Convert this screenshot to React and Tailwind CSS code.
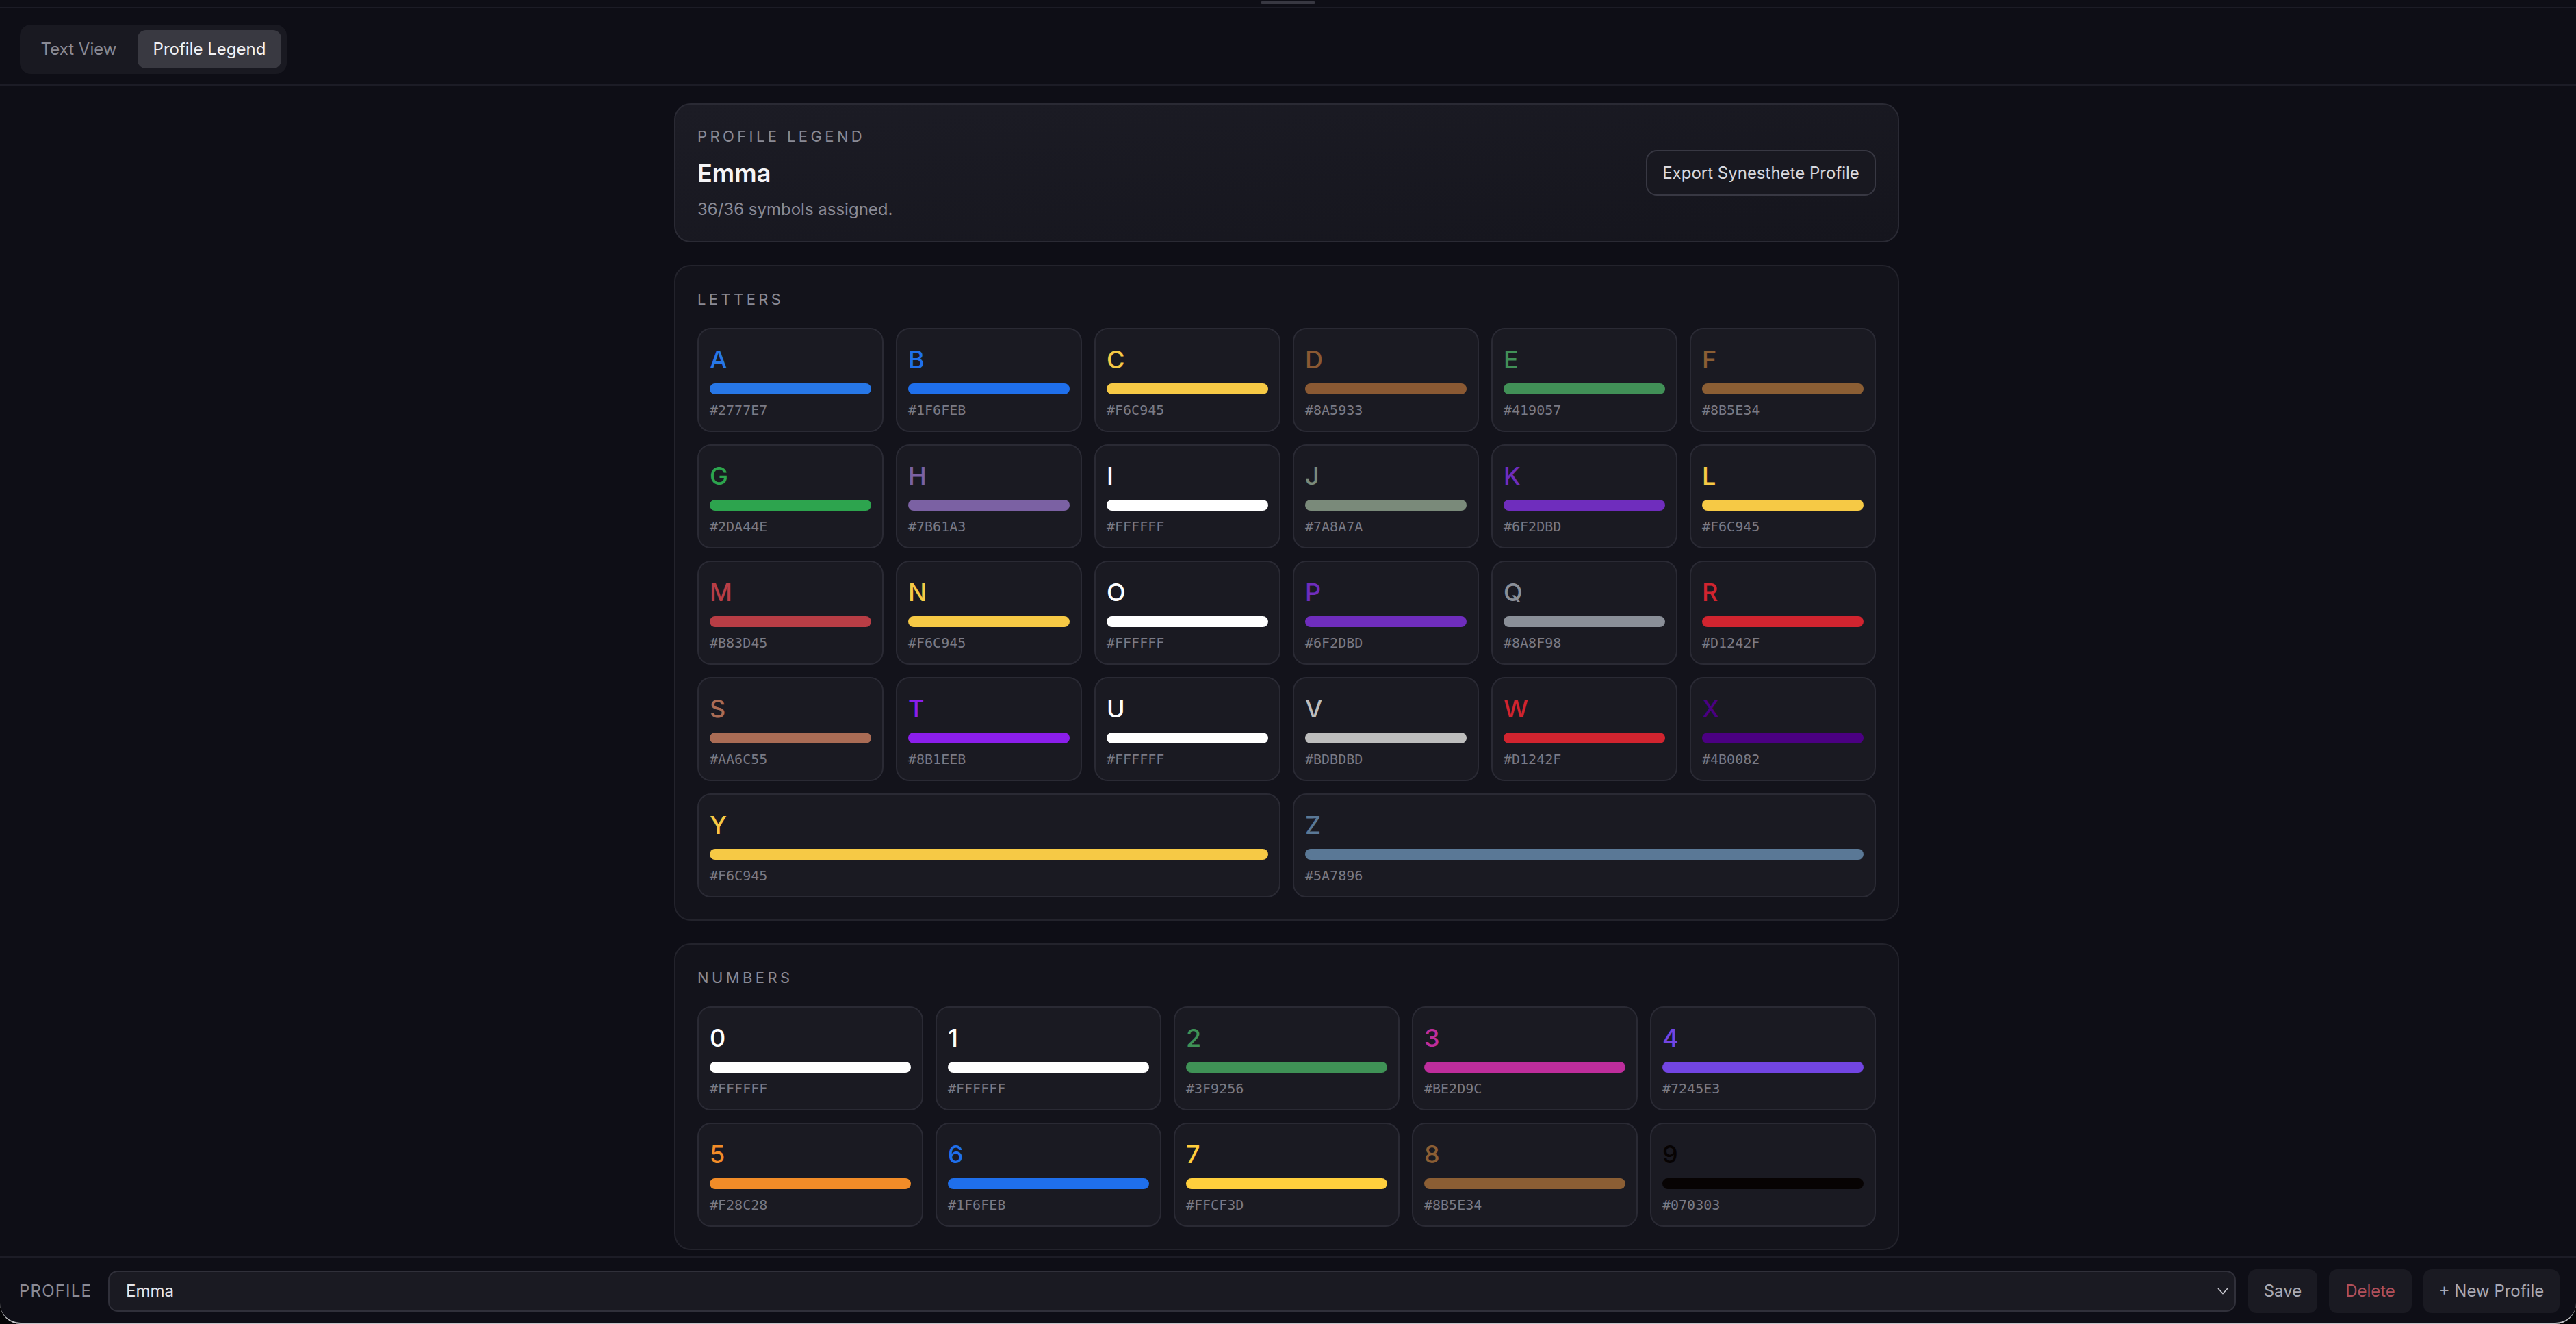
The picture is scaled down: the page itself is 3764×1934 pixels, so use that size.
import React from "react";

const LETTERS = [
  ["A", "#2777E7"], ["B", "#1F6FEB"], ["C", "#F6C945"], ["D", "#8A5933"], ["E", "#419057"], ["F", "#8B5E34"],
  ["G", "#2DA44E"], ["H", "#7B61A3"], ["I", "#FFFFFF"], ["J", "#7A8A7A"], ["K", "#6F2DBD"], ["L", "#F6C945"],
  ["M", "#B83D45"], ["N", "#F6C945"], ["O", "#FFFFFF"], ["P", "#6F2DBD"], ["Q", "#8A8F98"], ["R", "#D1242F"],
  ["S", "#AA6C55"], ["T", "#8B1EEB"], ["U", "#FFFFFF"], ["V", "#BDBDBD"], ["W", "#D1242F"], ["X", "#4B0082"],
  ["Y", "#F6C945"], ["Z", "#5A7896"],
];

const NUMBERS = [
  ["0", "#FFFFFF"], ["1", "#FFFFFF"], ["2", "#3F9256"], ["3", "#BE2D9C"], ["4", "#7245E3"],
  ["5", "#F28C28"], ["6", "#1F6FEB"], ["7", "#FFCF3D"], ["8", "#8B5E34"], ["9", "#070303"],
];

function Swatch({ ch, hex, wide }) {
  return (
    <div
      className={
        wide
          ? "col-span-3 h-[152px] rounded-[20px] border-2 border-[#2a2a34] bg-[#1a1a22] px-[16px] pt-[16px]"
          : "h-[152px] rounded-[20px] border-2 border-[#2a2a34] bg-[#1a1a22] px-[16px] pt-[16px]"
      }
    >
      <div className="text-[36px] leading-[56px] font-medium" style={{ color: hex }}>
        {ch}
      </div>
      <div className="mt-[7px] h-[16px] rounded-full" style={{ backgroundColor: hex }} />
      <div className="mt-[9px] font-['DejaVu_Sans_Mono',monospace] text-[20px] leading-[28px] text-[#7a7a85]">
        {hex}
      </div>
    </div>
  );
}

function SectionLabel({ children }) {
  return (
    <div className="text-[22px] leading-[32px] tracking-[0.2em] uppercase text-[#8a8a95]">{children}</div>
  );
}

export default function App() {
  return (
    <div className="h-screen w-full bg-[#050507] flex flex-col font-['Inter',sans-serif]">
      <div className="flex-1 min-h-0 flex flex-col bg-[#0e0e16] rounded-b-[30px] border-b-2 border-[#c4c4c8] overflow-hidden">
        {/* top strip */}
        <div className="h-[12px] shrink-0 flex justify-center border-b-2 border-[#1c1c26]">
          <div className="mt-[2px] h-[4px] w-[80px] rounded-[2px] bg-[#383842]" />
        </div>

        {/* tab bar */}
        <div className="shrink-0 flex pl-[29px] pt-[24px] pb-[15px] border-b-2 border-[#1c1c26]">
          <div className="flex gap-[8px] p-[8px] rounded-[16px] bg-[#191921]">
            <div className="h-[56px] w-[156px] flex items-center justify-center rounded-[12px] text-[24px] text-[#8a8a94]">
              Text View
            </div>
            <div className="h-[56px] w-[210px] flex items-center justify-center rounded-[12px] bg-[#393941] text-[24px] text-[#f2f2f5]">
              Profile Legend
            </div>
          </div>
        </div>

        {/* main */}
        <div className="flex-1 min-h-0 overflow-hidden pr-[4px]">
          <div className="mx-auto w-[1790px] pt-[26px] pb-[10px] flex flex-col gap-[33px]">
            {/* header card */}
            <div className="h-[203px] rounded-[24px] border-2 border-[#2a2a34] bg-gradient-to-br from-[#1c1c25] to-[#15151d] px-[32px] flex items-center justify-between">
              <div className="flex flex-col">
                <SectionLabel>Profile Legend</SectionLabel>
                <div className="mt-[10px] text-[36px] leading-[56px] font-semibold text-[#f4f4f7]">Emma</div>
                <div className="mt-[9px] text-[24px] leading-[32px] text-[#8a8a95]">36/36 symbols assigned.</div>
              </div>
              <div className="h-[67px] w-[336px] flex items-center justify-center rounded-[16px] border-2 border-[#383843] bg-[#181820] text-[24px] text-[#d8d8de]">
                Export Synesthete Profile
              </div>
            </div>

            {/* letters */}
            <div className="rounded-[24px] border-2 border-[#23232c] bg-[#13131b] p-[32px]">
              <SectionLabel>Letters</SectionLabel>
              <div className="mt-[26px] grid grid-cols-6 gap-[18px]">
                {LETTERS.map(([ch, hex]) => (
                  <Swatch key={ch} ch={ch} hex={hex} wide={ch === "Y" || ch === "Z"} />
                ))}
              </div>
            </div>

            {/* numbers */}
            <div className="rounded-[24px] border-2 border-[#23232c] bg-[#13131b] p-[32px]">
              <SectionLabel>Numbers</SectionLabel>
              <div className="mt-[26px] grid grid-cols-5 gap-[18px]">
                {NUMBERS.map(([ch, hex]) => (
                  <Swatch key={ch} ch={ch} hex={hex} />
                ))}
              </div>
            </div>
          </div>
        </div>

        {/* footer */}
        <div className="shrink-0 flex items-center border-t-2 border-[#1c1c26] pl-[28px] pr-[24px] pt-[17px] pb-[14px]">
          <div className="w-[104px] text-[24px] tracking-[0.05em] text-[#8a8a94]">PROFILE</div>
          <div className="ml-[26px] flex-1 h-[60px] rounded-[14px] border-2 border-[#30303a] bg-[#1a1a22] pl-[24px] pr-[8px] flex items-center justify-between">
            <span className="text-[24px] text-[#e6e6eb]">Emma</span>
            <svg width="18" height="12" viewBox="0 0 18 12" fill="none" stroke="#c8c8d0" strokeWidth="1.6">
              <polyline points="2,2 9,9.5 16,2" />
            </svg>
          </div>
          <div className="ml-[18px] h-[64px] w-[101px] flex items-center justify-center rounded-[12px] bg-[#1a1a22] text-[24px] text-[#a9a9b3]">
            Save
          </div>
          <div className="ml-[17px] h-[64px] w-[121px] flex items-center justify-center rounded-[12px] bg-[#1a1a22] text-[24px] text-[#b0505b]">
            Delete
          </div>
          <div className="ml-[17px] h-[64px] w-[199px] flex items-center justify-center rounded-[12px] bg-[#1a1a22] text-[24px] text-[#a9a9b3]">
            + New Profile
          </div>
        </div>
      </div>
    </div>
  );
}
